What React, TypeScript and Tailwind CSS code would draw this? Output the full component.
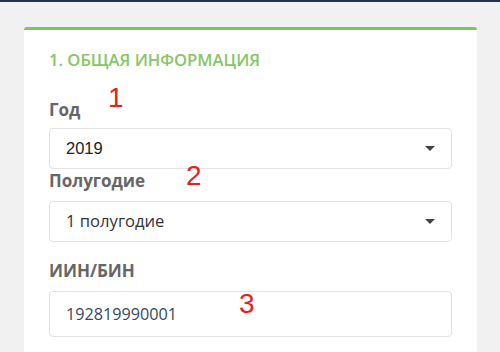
import React from "react";

function Caret() {
  return (
    <svg width="10" height="5" viewBox="0 0 10 5" className="shrink-0">
      <path d="M0 0 L10 0 L5 5 Z" fill="#444" />
    </svg>
  );
}

export default function App() {
  return (
    <div className="relative w-[500px] h-[352px] overflow-hidden bg-[#f1f1f1]" style={{ fontFamily: '"Open Sans", sans-serif' }}>
      <div className="h-[2px] bg-[#253350]" />
      <div className="ml-[24px] mt-[25px] w-[453px] h-[400px] bg-white border-t-[3px] border-[#80c463] rounded-t-[3px] px-[25px] pt-[20px]">
        <div className="text-[16.6px] leading-[20px] font-semibold text-[#86c664]">1. ОБЩАЯ ИНФОРМАЦИЯ</div>
        <div className="mt-[30px] text-[17px] leading-[20px] font-bold text-[#666]">Год</div>
        <div className="mt-[8px] h-[41px] border border-[#e2e2e2] rounded-[4px] flex items-center justify-between pl-[16px] pr-[16px]">
          <span className="text-[16.5px] text-[#222]" style={{ fontFamily: '"Liberation Sans", Arial, sans-serif' }}>2019</span>
          <Caret />
        </div>
        <div className="mt-[2px] text-[17px] leading-[20px] font-bold text-[#666]">Полугодие</div>
        <div className="mt-[10px] h-[41px] border border-[#e2e2e2] rounded-[4px] flex items-center justify-between pl-[16px] pr-[16px]">
          <span className="text-[16.6px] text-[#333]">1 полугодие</span>
          <Caret />
        </div>
        <div className="mt-[19px] text-[17px] leading-[20px] font-bold text-[#666]">ИИН/БИН</div>
        <div className="mt-[10px] h-[46px] border border-[#e2e2e2] rounded-[4px] flex items-center pl-[16px]">
          <span className="text-[16.2px] text-[#34495e]">192819990001</span>
        </div>
      </div>
      <span className="absolute left-[108px] top-[84px] text-[28px] leading-[28px] text-[#e8201c]" style={{ fontFamily: '"Liberation Sans", Arial, sans-serif' }}>1</span>
      <span className="absolute left-[186px] top-[162px] text-[28px] leading-[28px] text-[#e8201c]" style={{ fontFamily: '"Liberation Sans", Arial, sans-serif' }}>2</span>
      <span className="absolute left-[239px] top-[290px] text-[28px] leading-[28px] text-[#e8201c]" style={{ fontFamily: '"Liberation Sans", Arial, sans-serif' }}>3</span>
    </div>
  );
}
